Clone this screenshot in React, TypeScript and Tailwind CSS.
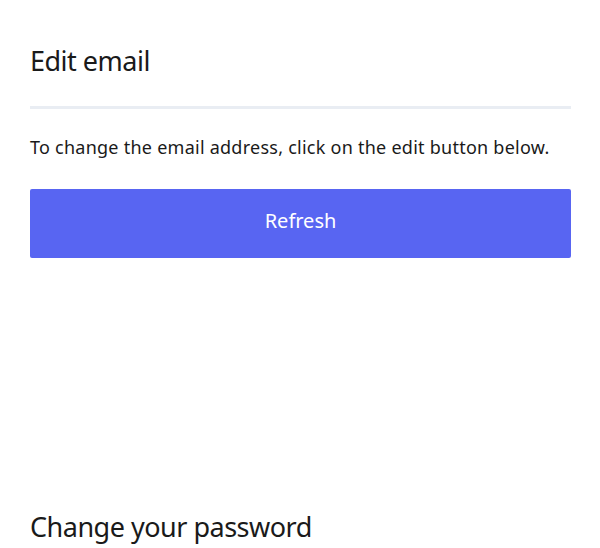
import React from 'react';

const App: React.FC = () => {
  return (
    <div className="min-h-screen bg-white px-[30px] pt-[40px] font-['Noto_Sans',sans-serif] text-[#1a1a1a]">
      {/* Edit email */}
      <section>
        <h2 className="text-[27px] leading-[42px] font-normal tracking-[-0.5px]">Edit email</h2>
        <div className="mt-[24px] h-[3px] w-[541px] bg-[#e9edf3]" />
        <p className="mt-[26px] text-[18px] leading-[24px] tracking-[0.25px]">
          To change the email address, click on the edit button below.
        </p>
        <button className="mt-[30px] flex h-[69px] w-[541px] items-center justify-center rounded-[2px] bg-[#5865f2] pb-[5px] text-[20px] text-white">
          Refresh
        </button>
      </section>

      {/* Change password */}
      <section className="mt-[248px]">
        <h2 className="text-[27px] leading-[42px] font-normal tracking-[-0.5px]">Change your password</h2>
      </section>
    </div>
  );
};

export default App;
